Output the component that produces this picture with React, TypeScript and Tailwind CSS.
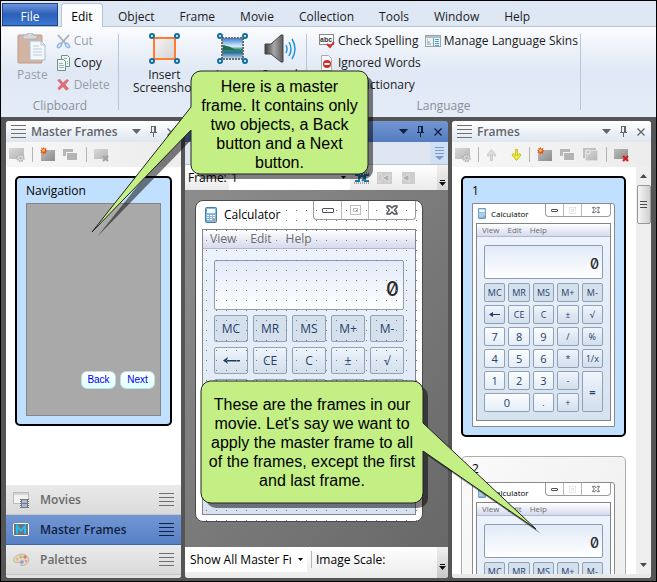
import type { ReactNode } from "react";

const uiFont = "font-['Open_Sans','Noto_Sans',sans-serif]";

/* ---------- small icons ---------- */

function Lines({ className = "text-[#6f6f6f]" }: { className?: string }) {
  return (
    <svg width="15" height="13" viewBox="0 0 15 13" className={className} fill="currentColor" aria-hidden="true">
      <path d="M0 0h15v1H0zM0 4h15v1H0zM0 8h15v1H0zM0 12h15v1H0z" />
    </svg>
  );
}

function ChevronIcon() {
  return (
    <svg width="9" height="5" viewBox="0 0 9 5" fill="currentColor" aria-hidden="true">
      <path d="M0 0h9L4.500 5z" />
    </svg>
  );
}

function PinIcon() {
  return (
    <svg width="9" height="11" viewBox="0 0 9 11" fill="currentColor" aria-hidden="true">
      <path d="M2 0h5v6h1v1H5v4H4V7H1V6h1zM3 1v5h2V1z" fillRule="evenodd" />
    </svg>
  );
}

function CloseIcon() {
  return (
    <svg width="8" height="8" viewBox="0 0 8 8" stroke="currentColor" strokeWidth="1.300" aria-hidden="true">
      <path d="M.5 .5l7 7M7.500 .5l-7 7" />
    </svg>
  );
}

function Burst() {
  return (
    <g>
      <path d="M3.500 0l.8 1.800L6.500 1l-.6 2 1.600 1-1.700 .8.7 2-2.100-.9-1.100 1.500-.8-1.900-2.100.6.9-2L0 3.200l1.800-.5L1.200.8l1.700.8z" fill="#e8501c" />
      <circle cx="3.500" cy="3.500" r="1.300" fill="#ffd84a" />
    </g>
  );
}

function Defs() {
  return (
    <svg width="0" height="0" className="absolute" aria-hidden="true">
      <defs>
        <linearGradient id="grayBox" x1="0" y1="0" x2="1" y2="1">
          <stop offset="0" stopColor="#bcbcbc" />
          <stop offset="1" stopColor="#8c8c8c" />
        </linearGradient>
        <linearGradient id="paleBox" x1="0" y1="0" x2="1" y2="1">
          <stop offset="0" stopColor="#d8d8d8" />
          <stop offset="1" stopColor="#b4b4b4" />
        </linearGradient>
        <linearGradient id="sky" x1="0" y1="0" x2="0" y2="1">
          <stop offset="0" stopColor="#2f7fd6" />
          <stop offset=".4" stopColor="#d9eefb" />
          <stop offset=".55" stopColor="#2f8a6c" />
          <stop offset=".7" stopColor="#2c6e9c" />
          <stop offset="1" stopColor="#cfe6f2" />
        </linearGradient>
        <linearGradient id="metal" x1="0" y1="0" x2="1" y2="0">
          <stop offset="0" stopColor="#3c3c3c" />
          <stop offset=".5" stopColor="#a8a8a8" />
          <stop offset="1" stopColor="#5a5a5a" />
        </linearGradient>
        <linearGradient id="shot" x1="0" y1="0" x2="1" y2="1">
          <stop offset="0" stopColor="#f4f4f4" />
          <stop offset="1" stopColor="#d4d4d4" />
        </linearGradient>
        <pattern id="gridDots" width="10" height="10" patternUnits="userSpaceOnUse">
          <rect x="0" y="9" width="1" height="1" fill="#777c82" />
        </pattern>
      </defs>
    </svg>
  );
}

function GearFrameIcon() {
  return (
    <svg width="16" height="16" viewBox="0 0 16 16" aria-hidden="true">
      <rect x="0" y="1" width="15" height="11" fill="url(#paleBox)" />
      <circle cx="11.500" cy="11" r="3.200" fill="#dcdcdc" stroke="#b4b4b4" strokeWidth="2" strokeDasharray="1.500 1" />
      <circle cx="11.500" cy="11" r="1.200" fill="#b0b0b0" />
    </svg>
  );
}

function NewFrameIcon() {
  return (
    <svg width="16" height="16" viewBox="0 0 16 16" aria-hidden="true">
      <rect x="1" y="3" width="14" height="11" fill="url(#grayBox)" />
      <Burst />
    </svg>
  );
}

function CopyFrameIcon() {
  return (
    <svg width="16" height="16" viewBox="0 0 16 16" aria-hidden="true">
      <rect x="0" y="2" width="10" height="7" fill="#b6b6b6" />
      <rect x="3.500" y="5.500" width="11" height="8" fill="#b4b4b4" stroke="#f4f4f4" />
    </svg>
  );
}

function FrameImageIcon() {
  return (
    <svg width="16" height="16" viewBox="0 0 16 16" aria-hidden="true">
      <rect x="0" y="1" width="13" height="10" fill="#c0c0c0" />
      <rect x="2.500" y="3.500" width="12" height="10" fill="url(#paleBox)" stroke="#ddd" />
      <circle cx="5" cy="5" r="2" fill="#c0c0c0" stroke="#f2f2f2" />
    </svg>
  );
}

function DeleteFrameIcon({ active = false }: { active?: boolean }) {
  return (
    <svg width="16" height="16" viewBox="0 0 16 16" aria-hidden="true">
      <rect x="0" y="2" width="14" height="10" fill={active ? "url(#grayBox)" : "url(#paleBox)"} />
      <path d="M9 9l5 5M14 9l-5 5" stroke={active ? "#d02020" : "#a2a2a2"} strokeWidth="2.200" />
    </svg>
  );
}

function ArrowIcon({ down = false }: { down?: boolean }) {
  return (
    <svg width="11" height="12" viewBox="0 0 11 12" aria-hidden="true">
      {down ? (
        <path d="M4.500 .5h2v6L9 4.500 10 6l-4.500 5.500L1 6l1-1.500 2.500 2z" fill="#f0ea3c" stroke="#b9b400" strokeWidth=".8" />
      ) : (
        <path d="M5.500 .5L10 6 9 7.500 6.500 5.500v6h-2v-6L2 7.500 1 6z" fill="#dcdcdc" stroke="#c2c2c2" strokeWidth=".8" />
      )}
    </svg>
  );
}

function OverflowIcon() {
  return (
    <svg width="7" height="6" viewBox="0 0 7 6" aria-hidden="true">
      <path d="M1 0h5v1H1zM0 2h7L3.500 6z" fill="#111" />
    </svg>
  );
}

function Corners() {
  return (
    <g fill="#fff" stroke="#0f6f9a" strokeWidth="2">
      <circle cx="3" cy="3" r="2" />
      <circle cx="28" cy="3" r="2" />
      <circle cx="3" cy="28" r="2" />
      <circle cx="28" cy="28" r="2" />
    </g>
  );
}

/* ---------- ribbon ---------- */

const tabs = ["Object", "Frame", "Movie", "Collection", "Tools", "Window", "Help"];

function TabBar() {
  return (
    <nav className="flex h-[26px] shrink-0 items-end border-b border-[#b4c3d5] bg-[#dee8f4] pl-px">
      <button className="h-[23px] w-14 border border-[#1d4489] bg-linear-to-b from-[#6d94dc] via-[#2c5fb9] to-[#3d78cf] pt-1 text-center text-white">
        File
      </button>
      <button className="-mb-px ml-[3px] h-6 w-[42px] rounded-t-[3px] border border-b-0 border-[#b4c3d5] bg-[#fbfcfe] pt-0.5">
        Edit
      </button>
      <div className="flex gap-px pl-[3px]">
        {tabs.map((t) => (
          <button key={t} className="h-[22px] px-3 pt-1 text-[#1c1c1c]">
            {t}
          </button>
        ))}
      </div>
    </nav>
  );
}

function SmallItem({ icon, label, muted = false }: { icon: ReactNode; label: string; muted?: boolean }) {
  return (
    <button className={`flex h-[22px] items-center gap-[3px] whitespace-nowrap ${muted ? "text-[#9a9fa6]" : "text-[#1c1c1c]"}`}>
      {icon}
      {label}
    </button>
  );
}

function BigItem({ icon, label, muted = false }: { icon: ReactNode; label: ReactNode; muted?: boolean }) {
  return (
    <button className={`flex flex-col items-center leading-[13px] ${muted ? "text-[#9a9fa6]" : "text-[#1c1c1c]"}`}>
      {icon}
      <span className="pt-[3px]">{label}</span>
    </button>
  );
}

function Group({ label, className, children }: { label?: string; className: string; children: ReactNode }) {
  return (
    <section className={`my-[7px] flex flex-col border-r border-[#b7c6d8] ${className}`}>
      <div className="-mt-1 flex flex-1">{children}</div>
      {label && <h2 className="h-4 text-center leading-5 text-[#8b8f95]">{label}</h2>}
    </section>
  );
}

function Ribbon() {
  return (
    <div className="flex h-[90px] shrink-0 bg-linear-to-b from-[#fbfcfe] via-[#dfe8f4] to-[#e4ecf8] pl-px">
      <Group label="Clipboard" className="w-[117px] shrink-0">
        <div className="flex w-full items-start gap-2 pl-[15px]">
          <div className="pt-[3px]">
            <BigItem
              muted
              label="Paste"
              icon={
                <svg width="30" height="32" viewBox="0 0 30 32" aria-hidden="true">
                  <rect x="1" y="2" width="24" height="28" rx="1" fill="#d3b3a1" stroke="#c09a86" />
                  <path d="M6 2h4l1-2h4l1 2h4v4H6z" fill="#d5d8dc" stroke="#aeb2b8" />
                  <path d="M13 8h11l4 4v15H13z" fill="#f4f8fb" stroke="#aebfcc" />
                  <path d="M24 8v4h4" fill="none" stroke="#aebfcc" />
                  <path d="M16 13h6M16 16h9M16 19h9M16 22h9" stroke="#bccbd6" />
                </svg>
              }
            />
          </div>
          <div className="flex flex-col">
            <SmallItem
              muted
              label="Cut"
              icon={
                <svg width="15" height="15" viewBox="0 0 15 15" fill="none" aria-hidden="true">
                  <path d="M2 1l8 9M13 1L5 10" stroke="#a5adb8" strokeWidth="1.800" />
                  <ellipse cx="3.500" cy="11.500" rx="2.500" ry="1.500" transform="rotate(-45 3.500 11.500)" stroke="#8cb4e2" strokeWidth="1.500" />
                  <ellipse cx="11.500" cy="11.500" rx="2.500" ry="1.500" transform="rotate(45 11.500 11.500)" stroke="#8cb4e2" strokeWidth="1.500" />
                </svg>
              }
            />
            <SmallItem
              label="Copy"
              icon={
                <svg width="15" height="16" viewBox="0 0 15 16" fill="#eef5f3" stroke="#70908a" aria-hidden="true">
                  <path d="M5.500 .5h6l2 2v9h-8z" />
                  <path d="M1.500 4.500h6l2 2v9h-8z" />
                  <path d="M3 8.500h4M3 10.500h5M3 12.500h5M8 3.500h3M11 6.500h1M11 8.500h1" stroke="#9bb2ae" />
                </svg>
              }
            />
            <SmallItem
              muted
              label="Delete"
              icon={
                <svg width="15" height="14" viewBox="0 0 15 14" aria-hidden="true">
                  <path d="M1 2l3-1 3 3.500L11 1l2 1.500L9.500 6.500 13 11l-3 1.500L7 9l-4 3.500L1.500 10 5 6.500z" fill="#d9707a" />
                </svg>
              }
            />
          </div>
        </div>
      </Group>

      <Group className="w-[188px] shrink-0">
        <div className="flex items-start pl-[14px] pt-[3px]">
          <BigItem
            label={<>Insert<br />Screenshot</>}
            icon={
              <svg width="31" height="32" viewBox="0 0 31 32" aria-hidden="true">
                <rect x="5" y="5" width="21" height="21" fill="url(#shot)" stroke="#ff7d32" strokeWidth="2" />
                <Corners />
              </svg>
            }
          />
          <div className="flex items-start gap-3 pl-5">
            <BigItem
              label="Image"
              icon={
                <svg width="31" height="32" viewBox="0 0 31 32" aria-hidden="true">
                  <rect x="5" y="5" width="21" height="21" fill="url(#sky)" stroke="#6d6d6d" strokeWidth="2" strokeDasharray="2 1" />
                  <path d="M6 12q7 1 13 5H6z" fill="#1f6d4c" />
                  <Corners />
                </svg>
              }
            />
            <BigItem
              label="Sound"
              icon={
                <svg width="32" height="32" viewBox="0 0 32 32" aria-hidden="true">
                  <path d="M1 11h6L17 2h2v27h-2L7 21H1z" fill="url(#metal)" stroke="#444" />
                  <path d="M22 12q2 4 0 8M25 9q4 7 0 14M28 6q6 10 0 20" fill="none" stroke="#2196dd" strokeWidth="1.500" />
                </svg>
              }
            />
          </div>
        </div>
      </Group>

      <Group label="Language" className="w-[274px] shrink-0">
        <div className="flex gap-1 pl-3">
          <div className="flex flex-col">
            <SmallItem
              label="Check Spelling"
              icon={
                <svg width="16" height="16" viewBox="0 0 16 16" aria-hidden="true">
                  <rect x=".5" y="1.500" width="14" height="10" fill="#fff" stroke="#888" />
                  <text x="1" y="9" fontSize="7" fontWeight="700" fontFamily="Liberation Sans" fill="#333">abc</text>
                  <path d="M8 11l3 3 4-5" fill="none" stroke="#d42a2a" strokeWidth="2" />
                </svg>
              }
            />
            <SmallItem
              label="Ignored Words"
              icon={
                <svg width="16" height="16" viewBox="0 0 16 16" aria-hidden="true">
                  <path d="M2.500 .5h7l3 3v12h-10z" fill="#fafafa" stroke="#aaa" />
                  <circle cx="8" cy="9" r="4" fill="#d42a2a" />
                  <path d="M5.500 8h5v2h-5z" fill="#fff" />
                </svg>
              }
            />
            <SmallItem
              label="My Dictionary"
              icon={
                <svg width="16" height="16" viewBox="0 0 16 16" aria-hidden="true">
                  <rect x="2.500" y="1.500" width="10" height="13" fill="#7fa6d8" stroke="#47699b" />
                </svg>
              }
            />
          </div>
          <div>
            <SmallItem
              label="Manage Language Skins"
              icon={
                <svg width="16" height="16" viewBox="0 0 16 16" aria-hidden="true">
                  <rect x=".5" y="2.500" width="15" height="11" fill="#eef3f7" stroke="#9aa4ad" />
                  <path d="M1 3h14v2H1z" fill="#b5bcc3" />
                  <path d="M2 7h1M2 9h3M2 11h4M8.500 5v8" stroke="#8a98a5" />
                  <path d="M10 6.500h4M10 8.500h4M10 10.500h4M10 12.500h4" stroke="#3ea7dc" />
                </svg>
              }
            />
          </div>
        </div>
      </Group>
    </div>
  );
}

/* ---------- panels ---------- */

function PanelHeader({ title, active = false }: { title?: string; active?: boolean }) {
  return (
    <header
      className={`flex h-[21px] shrink-0 items-center rounded-t-[3px] pr-0.5 ${
        active
          ? "bg-linear-to-b from-[#7296d2] to-[#557cbf] text-[#0e2040]"
          : "bg-linear-to-b from-[#ffffff] to-[#dee6f0] text-[#62666b]"
      }`}
    >
      {title && (
        <div className="flex items-center gap-[5px] pl-[5px]">
          <Lines />
          <h2 className="whitespace-nowrap font-semibold">{title}</h2>
        </div>
      )}
      <div className="ml-auto flex">
        <button aria-label="Panel menu" className="flex w-[17px] items-center justify-center"><ChevronIcon /></button>
        <button aria-label="Pin panel" className="flex w-[17px] items-center justify-center"><PinIcon /></button>
        <button aria-label="Close panel" className="flex w-[17px] items-center justify-center"><CloseIcon /></button>
      </div>
    </header>
  );
}

function ToolSep() {
  return <span className="h-[15px] w-px bg-[#b4b4b4]" />;
}

function Tool({ label, children }: { label: string; children: ReactNode }) {
  return (
    <button aria-label={label} className="flex h-5 items-center">
      {children}
    </button>
  );
}

function Toolbar({ children }: { children: ReactNode }) {
  return (
    <div className="flex h-[25px] shrink-0 items-center gap-[7px] bg-linear-to-r from-[#f7f7f7] to-[#ececec] pl-[3px]">
      {children}
    </div>
  );
}

function Accordion() {
  const row = "flex h-[30px] w-full items-center gap-[11px] border-b pl-[7px] pr-[7px] text-left font-semibold";
  return (
    <nav className="shrink-0">
      <button className={`${row} border-[#c6c6c6] bg-linear-to-b from-[#eaeaea] to-[#dadada] text-[#696969]`}>
        <svg width="16" height="16" viewBox="0 0 16 16" aria-hidden="true">
          <rect x=".5" y=".5" width="15" height="11" fill="#f2f2f2" stroke="#bbb" />
          <path d="M1 1h14v2H1z" fill="#d5d5d5" />
          <rect x="7" y="7" width="9" height="9" fill="#777" />
          <path d="M7 8h1v1H7zM7 10h1v1H7zM7 12h1v1H7zM7 14h1v1H7zM15 8h1v1h-1zM15 10h1v1h-1zM15 12h1v1h-1zM15 14h1v1h-1z" fill="#eee" />
          <path d="M9 8h5v3H9zM9 12h5v3H9z" fill="#a9b9dc" />
        </svg>
        <span className="flex-1">Movies</span>
        <Lines />
      </button>
      <button className={`${row} border-[#3e65a6] bg-linear-to-b from-[#7397d3] to-[#5780c6] text-[#0f2240]`}>
        <svg width="16" height="14" viewBox="0 0 16 14" aria-hidden="true">
          <rect x=".5" y=".5" width="15" height="12" rx="1" fill="#6f7479" stroke="#fff" />
          <path d="M4 11V3l4 5 4-5v8" fill="none" stroke="#20bdf2" strokeWidth="2" />
        </svg>
        <span className="flex-1">Master Frames</span>
        <Lines className="text-[#0f2240]" />
      </button>
      <button className={`${row} border-[#c6c6c6] bg-linear-to-b from-[#eaeaea] to-[#dadada] text-[#696969]`}>
        <svg width="16" height="14" viewBox="0 0 16 14" aria-hidden="true">
          <path d="M8 1q7 0 7.500 5.500T9 12.500q-2 0-1.500-2T5 9.500Q.5 10 .5 6.500T8 1z" fill="#e8d6bd" stroke="#c9b595" />
          <circle cx="4" cy="6" r="1.500" fill="#d9c08a" />
          <circle cx="8" cy="4" r="1.500" fill="#9cc48c" />
          <circle cx="12" cy="4" r="1.700" fill="#d97b7b" />
          <circle cx="9" cy="9" r="1.800" fill="#7ba4dd" />
          <circle cx="13" cy="8" r="1.300" fill="#c9a0cc" />
        </svg>
        <span className="flex-1">Palettes</span>
        <Lines />
      </button>
      <div className="h-[3px] bg-[#e2e2e2]" />
    </nav>
  );
}

function MasterFramesPanel() {
  return (
    <aside className="flex w-[175px] shrink-0 flex-col overflow-hidden rounded-[3px] bg-white">
      <PanelHeader title="Master Frames" />
      <Toolbar>
        <Tool label="Frame properties"><GearFrameIcon /></Tool>
        <ToolSep />
        <Tool label="New master frame"><NewFrameIcon /></Tool>
        <Tool label="Duplicate"><CopyFrameIcon /></Tool>
        <ToolSep />
        <Tool label="Delete"><DeleteFrameIcon /></Tool>
      </Toolbar>
      <div className="flex-1 px-[9px] pt-[9px]">
        <div className="flex h-[250px] flex-col rounded-[5px] border-2 border-black bg-[#c1e0ff] px-[9px] pb-2">
          <div className="h-[25px] leading-[25px] text-black">Navigation</div>
          <div className="flex flex-1 items-end justify-end gap-1 border border-[#858585] bg-[#a9a9a9] pb-[26px] pr-[5px]">
            {["Back", "Next"].map((b) => (
              <button
                key={b}
                className="h-[18px] w-[35px] rounded-[6px] border border-[#c5dede] bg-linear-to-b from-white to-[#dcffff] text-center font-['Liberation_Sans',Arial,sans-serif] text-[10px] leading-4 text-[#0000f0]"
              >
                {b}
              </button>
            ))}
          </div>
        </div>
      </div>
      <Accordion />
    </aside>
  );
}

/* ---------- calculator ---------- */

const keys = [
  "MC", "MR", "MS", "M+", "M-",
  "←", "CE", "C", "±", "√",
  "7", "8", "9", "/", "%",
  "4", "5", "6", "*", "1/x",
  "1", "2", "3", "-", "=",
  "0", ".", "+",
];

function keyTone(i: number) {
  if (i < 5) return "bg-[#d5e0ed]";
  const digit = /^[0-9.]$/.test(keys[i]);
  return digit ? "bg-linear-to-b from-[#fbfdff] to-[#e4edf7]" : "bg-linear-to-b from-[#f0f5fb] via-[#dfe9f4] to-[#d3dfec]";
}

function KeyLabel({ k, small }: { k: string; small: boolean }) {
  if (k !== "←") return <>{k}</>;
  return (
    <svg width={small ? 11 : 17} height="7" viewBox={small ? "0 0 11 7" : "0 0 17 7"} aria-label="Backspace">
      <path d={small ? "M0 3.500L4 1v2h7v1H4v2z" : "M0 3.500L5 0 4 3h13v1.500H4L5 7z"} fill="#1f3a66" />
    </svg>
  );
}

/* labelled: how many keys carry their caption; the rest are drawn blank */
function Calculator({ small = false, labelled = keys.length }: { small?: boolean; labelled?: number }) {
  const s = small;
  return (
    <div
      className={`relative flex flex-col bg-white ${
        s ? "h-[224px] rounded-tr-[3px] border border-[#8b8b8b] px-[3px] pb-[5px]" : "h-[322px] w-[228px] rounded-lg border border-[#4a4a4a] px-1.5 pb-1.5"
      }`}
    >
      <div className={`flex shrink-0 items-start justify-between ${s ? "h-[19px]" : "h-[28px]"}`}>
        <div className={`flex items-center text-black ${s ? "h-[19px] gap-[5px] pl-0.5 text-[8px]" : "h-[28px] gap-[7px] pl-[3px]"}`}>
          <svg width={s ? 8 : 12} height={s ? 11 : 16} viewBox="0 0 12 16" aria-hidden="true">
            <rect x=".5" y=".5" width="11" height="15" rx="1" fill="#7fb9e4" stroke="#3c7fb5" />
            <rect x="2" y="2" width="8" height="4" fill="#fff" />
            <path d="M2 8h2v1H2zM5 8h2v1H5zM8 8h2v1H8zM2 10h2v1H2zM5 10h2v1H5zM8 10h2v1H8zM2 12h2v1H2zM5 12h2v1H5z" fill="#fff" />
            <path d="M8 11h2v3H8z" fill="#f0953a" />
          </svg>
          <span>Calculator</span>
        </div>
        <div className={`flex rounded-b-[4px] border border-t-0 border-[#9c9c9c] bg-white ${s ? "h-[13px]" : "h-[19px]"}`}>
          <button aria-label="Minimize" className={`flex items-center justify-center border-r border-[#b9b9b9] ${s ? "w-[18px]" : "w-7"}`}>
            <span className={`rounded-[1px] border border-[#4f4f5c] ${s ? "h-[3px] w-[7px]" : "h-[5px] w-3"}`} />
          </button>
          <button aria-label="Maximize" className={`flex items-center justify-center border-r border-[#b9b9b9] ${s ? "w-[18px]" : "w-[27px]"}`}>
            <svg width={s ? 7 : 11} height={s ? 7 : 10} viewBox="0 0 11 10" fill="none" stroke={s ? "#dcdcdc" : "#bdbdbd"} aria-hidden="true">
              <rect x=".5" y=".5" width="10" height="9" />
              <rect x="3.500" y="3.500" width="4" height="3" />
            </svg>
          </button>
          <button aria-label="Close" className={`flex items-center justify-center ${s ? "w-[28px]" : "w-[46px]"}`}>
            <svg width={s ? 8 : 12} height={s ? 8 : 10} viewBox="0 0 12 10" fill="#fff" stroke="#4f4f5c" strokeWidth="1.300" aria-hidden="true">
              <path d="M1 1h3l2 2 2-2h3v1L8.500 5 11 8v1H8L6 7 4 9H1V8l2.500-3L1 2z" />
            </svg>
          </button>
        </div>
      </div>
      <div className="flex flex-1 flex-col border border-[#80858c] bg-linear-to-b from-[#eff4fd] to-[#d6e2ef]">
        <div
          className={`flex shrink-0 items-center border-b border-[#b3b8cf] bg-linear-to-b from-white to-[#d5daee] text-[#6d6d6d] ${
            s ? "h-[13px] gap-2 pl-[5px] text-[8px]" : "h-[19px] gap-3.5 pl-[7px]"
          }`}
        >
          <span>View</span>
          <span>Edit</span>
          <span>Help</span>
        </div>
        <div className={s ? "px-[7px] pt-2" : "px-[11px] pt-[11px]"}>
          <div
            className={`flex items-center justify-end rounded-[2px] border border-[#8d9db0] bg-linear-to-b from-[#e2eaf8] to-white font-['Inter',sans-serif] font-medium text-[#2a2a2a] [font-feature-settings:'zero'] ${
              s ? "mb-1 h-[34px] pr-[3px] pt-1 text-[14px]" : "mb-[5px] h-[50px] pr-1 pt-2 text-[20px]"
            }`}
          >
            0
          </div>
          <div className={`grid grid-cols-5 ${s ? "auto-rows-[19px] gap-[3px]" : "auto-rows-[27px] gap-[5px]"}`}>
            {keys.map((k, i) => (
              <button
                key={k}
                className={`flex items-center justify-center rounded-[2px] border border-[#8fa1b6] text-[#27406b] ${keyTone(i)} ${
                  s ? (/^[0-9=]$/.test(k) ? "text-[11px]" : "text-[9px]") : "text-[12px]"
                } ${k === "0" ? "col-span-2" : ""} ${k === "=" ? "row-span-2 font-bold" : ""}`}
              >
                {i < labelled && <KeyLabel k={k} small={s} />}
              </button>
            ))}
          </div>
        </div>
      </div>
      {!s && (
        <svg className="pointer-events-none absolute inset-0 h-full w-full" aria-hidden="true">
          <rect x="9" width="212" height="100%" fill="url(#gridDots)" />
        </svg>
      )}
    </div>
  );
}

function EditorPanel() {
  return (
    <main className="flex min-w-0 flex-1 flex-col overflow-hidden rounded-[3px] bg-[#7d7d7d]">
      <PanelHeader active />
      <div className="flex h-[23px] shrink-0 justify-end border-b border-[#b9c3d0] bg-[#dfe6f1]">
        <button aria-label="More" className="flex w-[18px] items-center justify-center bg-[#cfe0f4]">
          <svg width="9" height="13" viewBox="0 0 9 13" fill="#7d9bc6" aria-hidden="true">
            <path d="M0 0h9v1H0zM0 3h9v1H0zM0 6h9v1H0zM0 9h9L4.500 13z" />
          </svg>
        </button>
      </div>
      <div className="flex h-[25px] shrink-0 items-center bg-linear-to-b from-white to-[#ebebeb] pl-[3px]">
        <label htmlFor="frame" className="w-[41px] text-black">Frame:</label>
        <div className="relative flex w-[121px] items-center bg-white">
          <select id="frame" className="h-6 w-full appearance-none bg-transparent pl-0.5 text-black">
            <option>1</option>
          </select>
          <svg className="pointer-events-none absolute right-1" width="5" height="3" viewBox="0 0 5 3" aria-hidden="true">
            <path d="M0 0h5L2.500 3z" />
          </svg>
        </div>
        <div className="flex flex-1 gap-[7px] pl-1">
          <Tool label="Snap">
            <svg width="16" height="14" viewBox="0 0 16 14" fill="none" aria-hidden="true">
              <path d="M0 2h16M0 12h16" stroke="#555" strokeDasharray="1 1" />
              <path d="M1 4h4v6H1M15 4h-4v6h4M5 7l3-3 3 3-3 3" stroke="#1a78a8" strokeWidth="2" />
            </svg>
          </Tool>
          <Tool label="First frame">
            <svg width="16" height="14" viewBox="0 0 16 14" aria-hidden="true">
              <rect y="1" width="15" height="12" fill="#cdcdcd" />
              <path d="M2 3h2v8H2zM12 3v8L5 7z" fill="#b2b2b2" stroke="#e4e4e4" />
            </svg>
          </Tool>
          <Tool label="Previous frame">
            <svg width="16" height="14" viewBox="0 0 16 14" aria-hidden="true">
              <rect x="2" y="1" width="13" height="12" fill="#cdcdcd" />
              <path d="M9 3v8L2 7z" fill="#b2b2b2" stroke="#e4e4e4" />
            </svg>
          </Tool>
        </div>
        <button aria-label="Toolbar options" className="flex h-full w-[11px] items-end justify-center bg-linear-to-b from-[#f0f0f0] to-[#d6d6d6] pb-1">
          <OverflowIcon />
        </button>
      </div>
      <div className="flex-1 bg-linear-to-br from-[#8d8d8d] to-[#686868] px-2.5 pt-2.5">
        <Calculator labelled={10} />
      </div>
      <div className="flex h-[31px] shrink-0 bg-linear-to-b from-white to-[#ebebeb] pb-1.5">
        <div className="relative flex w-[122px] items-center bg-white">
          <select aria-label="Master frame filter" className="h-full w-[106px] appearance-none bg-transparent pl-[5px] text-black">
            <option>Show All Master Fr</option>
          </select>
          <svg className="pointer-events-none absolute right-1" width="5" height="3" viewBox="0 0 5 3" aria-hidden="true">
            <path d="M0 0h5L2.500 3z" />
          </svg>
        </div>
        <div className="my-1 ml-1 flex flex-1 items-center border-l border-[#b4b4b4] pl-1 text-black">Image Scale:</div>
        <button aria-label="Toolbar options" className="-mb-1.5 flex w-[11px] items-end justify-center bg-linear-to-b from-[#f0f0f0] to-[#c8c8c8] pb-2">
          <OverflowIcon />
        </button>
      </div>
    </main>
  );
}

function FramesPanel() {
  return (
    <aside className="flex w-[199px] shrink-0 flex-col overflow-hidden rounded-[3px] bg-white">
      <PanelHeader title="Frames" />
      <Toolbar>
        <Tool label="Frame properties"><GearFrameIcon /></Tool>
        <ToolSep />
        <Tool label="Move up"><ArrowIcon /></Tool>
        <span />
        <Tool label="Move down"><ArrowIcon down /></Tool>
        <ToolSep />
        <Tool label="New frame"><NewFrameIcon /></Tool>
        <Tool label="Duplicate"><CopyFrameIcon /></Tool>
        <Tool label="Export image"><FrameImageIcon /></Tool>
        <ToolSep />
        <Tool label="Delete frame"><DeleteFrameIcon active /></Tool>
      </Toolbar>
      <div className="flex min-h-0 flex-1">
        <div className="flex flex-1 flex-col gap-[19px] overflow-hidden pl-[9px] pr-2.5 pt-[9px]">
          <div className="shrink-0 rounded-[5px] border-2 border-black bg-[#c1e0ff] px-[9px] pb-2">
            <div className="h-[25px] leading-[25px] text-black">1</div>
            <Calculator small />
          </div>
          <div className="shrink-0 rounded-[5px] border border-[#adadad] bg-linear-to-br from-[#fafafa] to-[#ebebeb] px-2.5 pb-2">
            <div className="h-[25px] leading-[23px] text-black">2</div>
            <Calculator small labelled={5} />
          </div>
        </div>
        <div className="flex w-[15px] flex-col items-center bg-[#efefef] py-[7px] text-[#4a4a4a]">
          <svg width="7" height="4" viewBox="0 0 7 4" fill="currentColor" aria-hidden="true"><path d="M0 4h7L3.500 0z" /></svg>
          <div className="mt-[7px] flex h-[39px] w-[14px] items-center justify-center rounded-[2px] border border-[#979797] bg-linear-to-r from-[#f5f5f5] to-[#cfcfcf]">
            <svg width="7" height="8" viewBox="0 0 7 8" fill="currentColor" aria-hidden="true"><path d="M0 0h7v1H0zM0 3h7v1H0zM0 6h7v1H0z" /></svg>
          </div>
          <svg className="mt-auto" width="7" height="4" viewBox="0 0 7 4" fill="currentColor" aria-hidden="true"><path d="M0 0h7L3.500 4z" /></svg>
        </div>
      </div>
      <div className="h-1 shrink-0 bg-[#e8e8e8]" />
    </aside>
  );
}

/* ---------- speech bubbles over the window ---------- */

const bubbleOne = "M201 71H359a9 9 0 0 1 9 9V165a9 9 0 0 1 -9 9H200a9 9 0 0 1 -9 -9V130L92 232L191 107V81a10 10 0 0 1 10 -10z";
const bubbleTwo = "M210 381H413a10 10 0 0 1 10 10V423L536 529L423 451V493a10 10 0 0 1 -10 10H211a10 10 0 0 1 -10 -10V391a10 10 0 0 1 9 -10z";

function Bubbles() {
  const text = "absolute flex items-center justify-center text-center font-['Liberation_Sans',Arial,sans-serif] text-[16px] leading-[19px] text-black";
  return (
    <div className="pointer-events-none absolute -inset-px">
      <svg className="absolute inset-0 h-full w-full" aria-hidden="true">
        {[bubbleOne, bubbleTwo].map((d) => (
          <g key={d}>
            <path d={d} transform="translate(5 5)" fill="#000" fillOpacity=".5" />
            <path d={d} fill="#c3ef85" stroke="#222" />
          </g>
        ))}
      </svg>
      <p className={`${text} left-[191px] top-[73px] h-[103px] w-[177px]`}>
        <span>Here is a master<br />frame. It contains only<br />two objects, a Back<br />button and a Next<br />button.</span>
      </p>
      <p className={`${text} left-[201px] top-[381px] h-[122px] w-[222px]`}>
        <span>These are the frames in our<br />movie. Let's say we want to<br />apply the master frame to all<br />of the frames, except the first<br />and last frame.</span>
      </p>
    </div>
  );
}

export default function App() {
  return (
    <div className={`relative flex h-screen flex-col overflow-hidden border border-black bg-[#555] text-[12px] leading-4 ${uiFont}`}>
      <Defs />
      <TabBar />
      <Ribbon />
      <div className="flex min-h-0 flex-1 gap-1 px-[5px] pb-[3px] pt-1">
        <MasterFramesPanel />
        <EditorPanel />
        <FramesPanel />
      </div>
      <Bubbles />
    </div>
  );
}
